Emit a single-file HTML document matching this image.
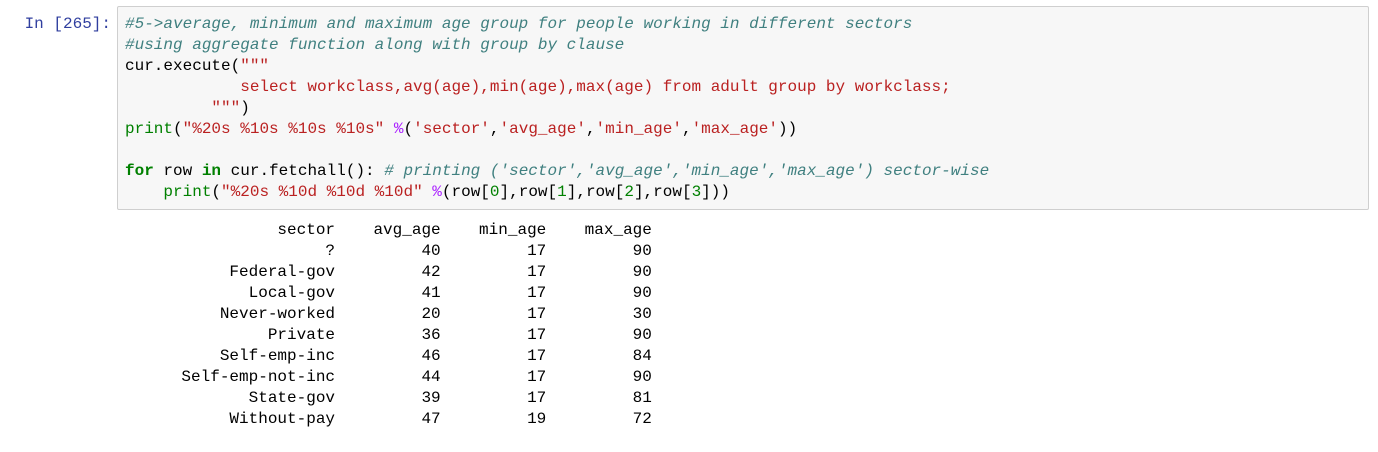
<!DOCTYPE html>
<html><head><meta charset="utf-8"><style>
body{margin:0;background:#fff;width:1378px;height:452px;overflow:hidden;position:relative;font-family:"Liberation Mono",monospace;font-size:16px;}
.p{position:absolute;left:0;width:111px;top:14px;text-align:right;color:#303f9f;line-height:21px;white-space:pre}
.box{position:absolute;left:117px;top:6px;width:1250px;height:202px;background:#f7f7f7;border:1px solid #cfcfcf;border-radius:2px}
pre{margin:0;font:inherit;line-height:21px;white-space:pre;position:absolute}
.c{color:#408080;font-style:italic}.s{color:#ba2121}.k{color:#008000;font-weight:bold}.b{color:#008000}.o{color:#aa22ff}.n{color:#008000}
</style></head><body>
<div class="p">In [265]:</div>
<div class="box"></div>
<pre style="left:125px;top:14px"><span class="c">#5->average, minimum and maximum age group for people working in different sectors</span>
<span class="c">#using aggregate function along with group by clause</span>
cur.execute(<span class="s">"""</span>
<span class="s">            select workclass,avg(age),min(age),max(age) from adult group by workclass;</span>
<span class="s">         """</span>)
<span class="b">print</span>(<span class="s">"%20s %10s %10s %10s"</span> <span class="o">%</span>(<span class="s">'sector'</span>,<span class="s">'avg_age'</span>,<span class="s">'min_age'</span>,<span class="s">'max_age'</span>))

<span class="k">for</span> row <span class="k">in</span> cur.fetchall(): <span class="c"># printing ('sector','avg_age','min_age','max_age') sector-wise</span>
    <span class="b">print</span>(<span class="s">"%20s %10d %10d %10d"</span> <span class="o">%</span>(row[<span class="n">0</span>],row[<span class="n">1</span>],row[<span class="n">2</span>],row[<span class="n">3</span>]))</pre>
<pre style="left:143px;top:220px">              sector    avg_age    min_age    max_age
                   ?         40         17         90
         Federal-gov         42         17         90
           Local-gov         41         17         90
        Never-worked         20         17         30
             Private         36         17         90
        Self-emp-inc         46         17         84
    Self-emp-not-inc         44         17         90
           State-gov         39         17         81
         Without-pay         47         19         72</pre>
</body></html>
